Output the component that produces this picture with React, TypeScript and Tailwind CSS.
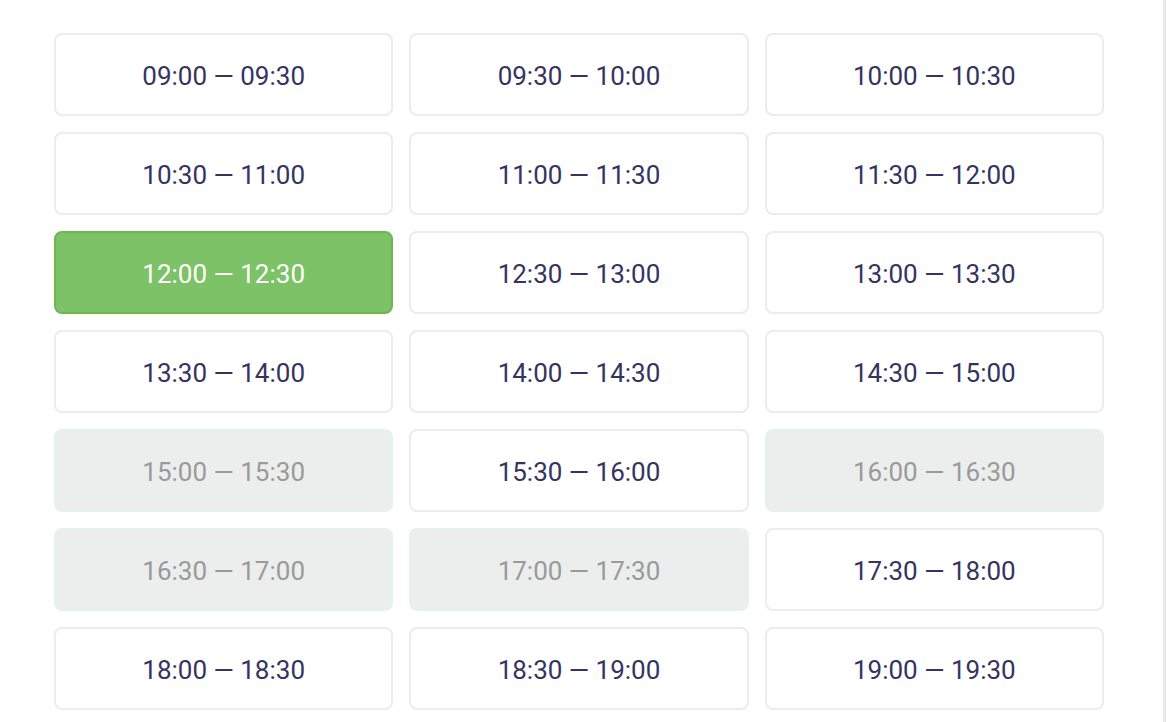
const slots = [
  ["09:00 — 09:30", "normal"],
  ["09:30 — 10:00", "normal"],
  ["10:00 — 10:30", "normal"],
  ["10:30 — 11:00", "normal"],
  ["11:00 — 11:30", "normal"],
  ["11:30 — 12:00", "normal"],
  ["12:00 — 12:30", "active"],
  ["12:30 — 13:00", "normal"],
  ["13:00 — 13:30", "normal"],
  ["13:30 — 14:00", "normal"],
  ["14:00 — 14:30", "normal"],
  ["14:30 — 15:00", "normal"],
  ["15:00 — 15:30", "disabled"],
  ["15:30 — 16:00", "normal"],
  ["16:00 — 16:30", "disabled"],
  ["16:30 — 17:00", "disabled"],
  ["17:00 — 17:30", "disabled"],
  ["17:30 — 18:00", "normal"],
  ["18:00 — 18:30", "normal"],
  ["18:30 — 19:00", "normal"],
  ["19:00 — 19:30", "normal"],
] as const;

const styles = {
  normal: "bg-white border-[#ebecec] text-[#35345f]",
  active: "bg-[#7dc267] border-[#6db657] text-white",
  disabled: "bg-[#eceeed] border-[#e4f2ee] text-[#9a9a9a]",
};

const App = () => {
  return (
    <div
      className="h-[722px] w-[1166px] bg-white flex overflow-hidden"
      style={{ fontFamily: "Roboto, 'Liberation Sans', sans-serif" }}
    >
      <div className="flex-1 pl-[54px] pt-[33px]">
        <div className="grid grid-cols-3 gap-x-[16px] gap-y-[16px] w-[1050px]">
          {slots.map(([label, state]) => (
            <button
              key={label}
              className={`h-[83px] pt-[3px] rounded-[8px] border-2 flex items-center justify-center text-[26px] ${styles[state]}`}
            >
              {label}
            </button>
          ))}
        </div>
      </div>
      <div className="w-[3px] h-full bg-[#e8e8e8]" />
    </div>
  );
};

export default App;
